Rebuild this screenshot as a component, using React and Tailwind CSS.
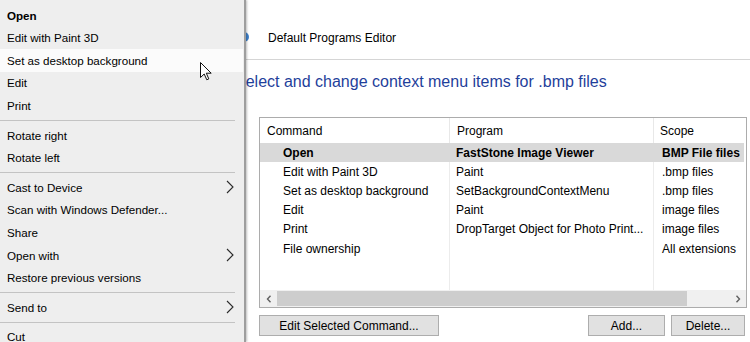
import React from "react";

const menu = [
  { t: "Open", bold: true },
  { t: "Edit with Paint 3D" },
  { t: "Set as desktop background", hover: true },
  { t: "Edit" },
  { t: "Print" },
  "sep",
  { t: "Rotate right" },
  { t: "Rotate left" },
  "sep",
  { t: "Cast to Device", sub: true },
  { t: "Scan with Windows Defender..." },
  { t: "Share" },
  { t: "Open with", sub: true },
  { t: "Restore previous versions" },
  "sep",
  { t: "Send to", sub: true },
  "sep",
  { t: "Cut" },
];

const rows = [
  ["Open", "FastStone Image Viewer", "BMP File files", true],
  ["Edit with Paint 3D", "Paint", ".bmp files"],
  ["Set as desktop background", "SetBackgroundContextMenu", ".bmp files"],
  ["Edit", "Paint", "image files"],
  ["Print", "DropTarget Object for Photo Print...", "image files"],
  ["File ownership", "", "All extensions"],
];

function Chevron() {
  return (
    <svg width="8" height="14" viewBox="0 0 8 14" className="shrink-0">
      <polyline points="1,1 7,7 1,13" fill="none" stroke="#2b2b2b" strokeWidth="1.1" />
    </svg>
  );
}

function ContextMenu() {
  return (
    <div className="absolute left-0 top-0 z-10 flex h-[342px] w-[246px] flex-col border-r-[2px] border-[#9e9e9e] bg-[#eeeeee] pt-[4px] pr-[1px] text-[11.6px] text-black shadow-[1px_0_2px_rgba(0,0,0,0.25)]">
      {menu.map((m, i) =>
        m === "sep" ? (
          <div key={i} className="flex h-[7px] shrink-0 items-center pr-[8px]">
            <div className="h-px w-full bg-[#c3c3c3]" />
          </div>
        ) : (
          <div
            key={i}
            className={`flex h-[22.6px] shrink-0 items-center justify-between pl-[7px] pr-[9px] ${
              m.hover ? "bg-[#fbfbfb]" : ""
            } ${m.bold ? "font-bold" : ""}`}
          >
            <span className="whitespace-nowrap">{m.t}</span>
            {m.sub && <Chevron />}
          </div>
        )
      )}
    </div>
  );
}

function Cursor() {
  return (
    <svg
      width="13"
      height="20"
      viewBox="0 0 13 20"
      className="absolute left-[200px] top-[62px] z-20"
    >
      <path
        d="M0.5 0.5 L0.5 15.5 L4.2 12 L6.8 17.8 L8.8 16.9 L6.3 11.2 L11.2 11.2 Z"
        fill="#ffffff"
        stroke="#111111"
        strokeWidth="1"
        strokeLinejoin="round"
      />
    </svg>
  );
}

function Table() {
  return (
    <div className="ml-[259px] mr-[3px] mt-[25px] flex h-[191px] flex-col border border-[#acacac] bg-white text-[12px] text-black">
      <div className="grid h-[25px] shrink-0 grid-cols-[190px_204px_1fr]">
        <div className="flex items-center border-r border-[#e8e8e8] pl-[7px]">Command</div>
        <div className="flex items-center border-r border-[#e8e8e8] pl-[7px]">Program</div>
        <div className="flex items-center pl-[6px]">Scope</div>
      </div>
      <div className="flex flex-1 flex-col">
        {rows.map((r, i) => (
          <div
            key={i}
            className={`grid h-[19.2px] shrink-0 grid-cols-[190px_204px_1fr] ${
              r[3] ? "bg-[#d9d9d9] font-bold mr-[2px]" : ""
            }`}
          >
            <div className={`flex items-center whitespace-nowrap border-r pl-[23px] ${r[3] ? "border-[#d9d9d9]" : "border-[#ececec]"}`}>
              {r[0]}
            </div>
            <div className={`flex items-center overflow-hidden whitespace-nowrap border-r pl-[6px] ${r[3] ? "border-[#d9d9d9]" : "border-[#ececec]"}`}>
              {r[1]}
            </div>
            <div className="flex items-center overflow-hidden whitespace-nowrap pl-[8px]">{r[2]}</div>
          </div>
        ))}
        <div className="grid flex-1 grid-cols-[190px_204px_1fr]">
          <div className="border-r border-[#ececec]" />
          <div className="border-r border-[#ececec]" />
          <div />
        </div>
      </div>
      <div className="flex h-[17px] shrink-0 bg-[#f0f0f0]">
        <div className="flex w-[17px] items-center justify-center">
          <svg width="6" height="8" viewBox="0 0 6 8">
            <polyline points="4.5,0.8 1.5,4 4.5,7.2" fill="none" stroke="#606060" strokeWidth="1.4" />
          </svg>
        </div>
        <div className="flex flex-1 items-stretch py-px">
          <div className="w-[410px] bg-[#cdcdcd]" />
        </div>
        <div className="flex w-[17px] items-center justify-center">
          <svg width="6" height="8" viewBox="0 0 6 8">
            <polyline points="1.5,0.8 4.5,4 1.5,7.2" fill="none" stroke="#606060" strokeWidth="1.4" />
          </svg>
        </div>
      </div>
    </div>
  );
}

function Btn({ w, children }) {
  return (
    <div
      className={`flex h-[21px] items-center justify-center border border-[#adadad] bg-[#e1e1e1] text-[12px] text-black ${w}`}
    >
      {children}
    </div>
  );
}

export default function App() {
  return (
    <div
      className="relative h-[342px] w-[750px] overflow-hidden bg-white"
      style={{ fontFamily: '"Liberation Sans", Arial, sans-serif' }}
    >
      <div className="flex h-full flex-col">
        <div className="flex h-[60px] shrink-0 items-start border-b border-[#d5d5d5] pl-[234px] pt-[30px]">
          <svg width="16" height="16" viewBox="0 0 16 16" className="mt-[-1px]">
            <circle cx="10" cy="8" r="5" fill="#3f82cc" />
          </svg>
          <span className="ml-[18px] text-[12px] leading-[16px] text-black">Default Programs Editor</span>
        </div>
        <div className="mt-[12px] h-[20px] pl-[235px] text-[16px] leading-[20px] text-[#1f3f9b] whitespace-nowrap">
          Select and change context menu items for .bmp files
        </div>
        <Table />
        <div className="ml-[259px] mr-[5px] mt-[7px] flex items-center">
          <Btn w="w-[180px]">Edit Selected Command...</Btn>
          <div className="flex-1" />
          <Btn w="w-[77px]">Add...</Btn>
          <div className="w-[6px]" />
          <Btn w="w-[74px]">Delete...</Btn>
        </div>
      </div>
      <ContextMenu />
      <Cursor />
    </div>
  );
}
